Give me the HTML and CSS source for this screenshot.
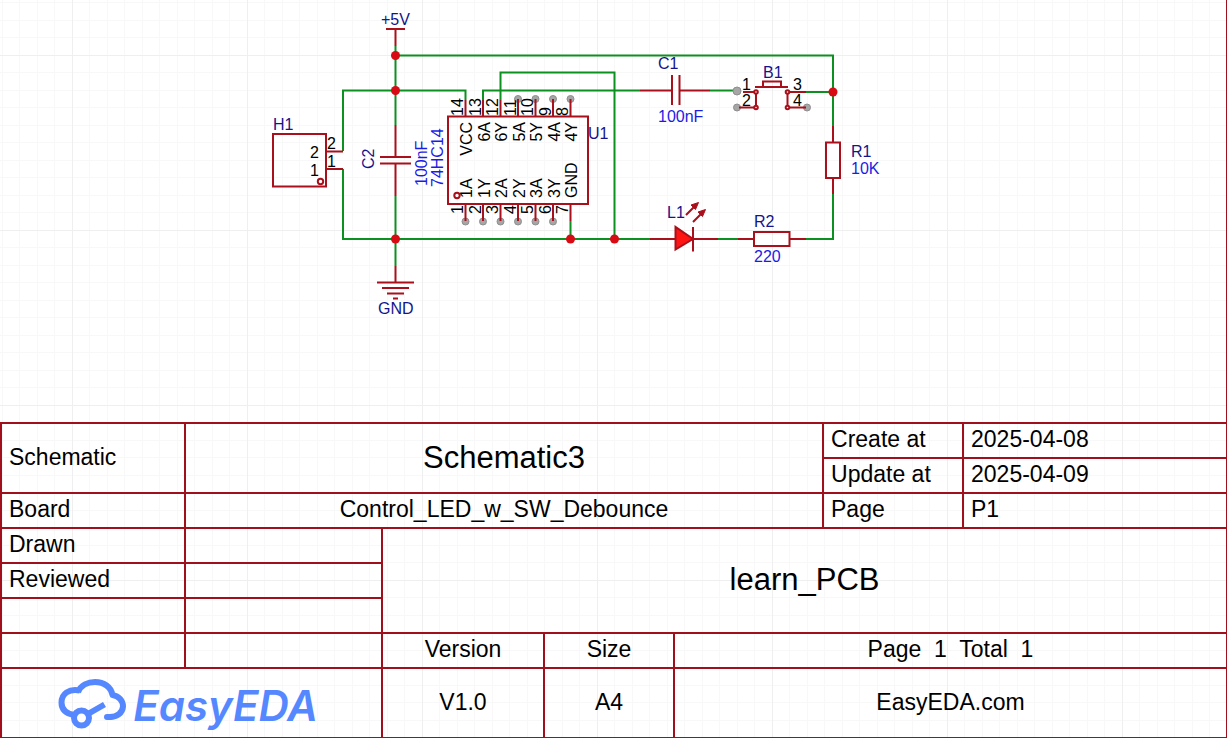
FILE: index.html
```html
<!DOCTYPE html>
<html lang="en">
<head>
<meta charset="utf-8">
<title>Schematic3 - learn_PCB</title>
<link rel="stylesheet" href="styles.css">
</head>
<body>
<main class="sheet">
  <svg class="schematic" viewBox="0 0 1226 422" role="img" aria-label="Switch debounce schematic">
    <!-- wires -->
    <g class="wire">
      <path d="M395.5 46V125M395.5 55.500H833V126M343 151V90.500H465.500V100M395.500 196V266"/>
      <path d="M343 169V239H650M483 100V90.500H640M500.500 100V72.500H614.500V239M570.500 221V239"/>
      <path d="M710 90.500H737M806 92H833M833 194V239H806M718 239H738"/>
    </g>
    <!-- unconnected pin ends -->
    <g class="open-pin">
      <circle cx="518" cy="99" r="3.500"/><circle cx="535.500" cy="99" r="3.500"/><circle cx="553" cy="99" r="3.500"/><circle cx="570.500" cy="99" r="3.500"/>
      <circle cx="465.500" cy="221.500" r="3.500"/><circle cx="483" cy="221.500" r="3.500"/><circle cx="500.500" cy="221.500" r="3.500"/><circle cx="518" cy="221.500" r="3.500"/><circle cx="535.500" cy="221.500" r="3.500"/><circle cx="553" cy="221.500" r="3.500"/>
      <circle cx="737" cy="91" r="4"/><circle cx="737" cy="107.500" r="3.500"/><circle cx="807" cy="107.500" r="3.500"/>
    </g>
    <!-- component outlines -->
    <g class="part">
      <path d="M386 29H405M395.500 29V46"/>
      <path d="M395.500 125V157M395.500 164V196M380 157H411M380 163.500H411"/>
      <path d="M395.500 266V283M377 282.500H414M382 288H409M387 293.500H404M393 298.500H398"/>
      <rect x="273" y="134" width="53" height="52.500"/>
      <path d="M326 151.500H343M326 169H343"/>
      <circle cx="320.500" cy="181.500" r="2.700"/>
      <rect x="448" y="116.500" width="140" height="87.500"/>
      <circle cx="457" cy="195.500" r="2.700"/>
      <path d="M465.500 100V116M483 100V116M500.500 100V116M518 99V116M535.500 99V116M553 99V116M570.500 99V116"/>
      <path d="M465.500 204V221M483 204V221M500.500 204V221M518 204V221M535.500 204V221M553 204V221M570.500 204V221"/>
      <path d="M640 90.500H672M680 90.500H710M672 75V105M679.500 75V105"/>
      <path d="M743 92H754M739 107.500H754M756 94V106M787.500 94V106M789.500 92H806M789.500 107.500H806M755 87H788M763 87V81.500H781V87"/>
      <circle cx="756" cy="92" r="1.800"/><circle cx="756" cy="107.500" r="1.800"/><circle cx="787.500" cy="92" r="1.800"/><circle cx="787.500" cy="107.500" r="1.800"/>
      <path d="M833 126V142M833 178V194"/>
      <rect x="826" y="142.500" width="14" height="35.500"/>
      <path d="M738 239H754M789 239H806"/>
      <rect x="754" y="232" width="35.500" height="14"/>
      <path d="M650 239H675M693 239H718M693 227V251.500M686 215L695 206M693 222L702 213"/>
      <path class="led" d="M675.500 227V249.500L693 239Z"/>
      <path class="arrow" d="M698.500 202.500L691 205L695.500 209.500ZM705.500 209.500L698 212L702.500 216.500Z"/>
    </g>
    <!-- junctions -->
    <g class="junction">
      <circle cx="395.500" cy="55.500" r="4.500"/><circle cx="395.500" cy="90.500" r="4.500"/><circle cx="395.500" cy="239" r="4.500"/>
      <circle cx="570.500" cy="239" r="4.500"/><circle cx="614.500" cy="239" r="4.500"/><circle cx="833" cy="92" r="4.500"/>
    </g>
    <!-- designators -->
    <g class="name">
      <text x="381" y="25">+5V</text>
      <text x="378" y="314">GND</text>
      <text x="273" y="130">H1</text>
      <text transform="translate(374 169) rotate(-90)">C2</text>
      <text x="588" y="139">U1</text>
      <text x="658" y="69">C1</text>
      <text x="763" y="78">B1</text>
      <text x="667" y="218">L1</text>
      <text x="754" y="227">R2</text>
      <text x="851" y="157">R1</text>
    </g>
    <!-- values -->
    <g class="value">
      <text transform="translate(427 186) rotate(-90)">100nF</text>
      <text transform="translate(443 187) rotate(-90)">74HC14</text>
      <text x="658" y="122">100nF</text>
      <text x="754" y="262">220</text>
      <text x="851" y="174">10K</text>
    </g>
    <!-- pin numbers and names -->
    <g class="pin">
      <text x="310" y="158">2</text><text x="327" y="149">2</text>
      <text x="310" y="176">1</text><text x="327" y="167">1</text>
      <text x="742" y="90">1</text><text x="742" y="106">2</text>
      <text x="793" y="90">3</text><text x="793" y="106">4</text>
      <text transform="translate(463 116) rotate(-90)">14</text>
      <text transform="translate(481 116) rotate(-90)">13</text>
      <text transform="translate(498 116) rotate(-90)">12</text>
      <text transform="translate(516 116) rotate(-90)">11</text>
      <text transform="translate(533 116) rotate(-90)">10</text>
      <text transform="translate(551 116) rotate(-90)">9</text>
      <text transform="translate(568 116) rotate(-90)">8</text>
      <text transform="translate(472 198) rotate(-90)">1A</text>
      <text transform="translate(490 198) rotate(-90)">1Y</text>
      <text transform="translate(507 198) rotate(-90)">2A</text>
      <text transform="translate(525 198) rotate(-90)">2Y</text>
      <text transform="translate(542 198) rotate(-90)">3A</text>
      <text transform="translate(560 198) rotate(-90)">3Y</text>
      <text transform="translate(577 198) rotate(-90)">GND</text>
    </g>
    <g class="pin pin-end">
      <text transform="translate(472 122) rotate(-90)">VCC</text>
      <text transform="translate(490 122) rotate(-90)">6A</text>
      <text transform="translate(507 122) rotate(-90)">6Y</text>
      <text transform="translate(525 122) rotate(-90)">5A</text>
      <text transform="translate(542 122) rotate(-90)">5Y</text>
      <text transform="translate(560 122) rotate(-90)">4A</text>
      <text transform="translate(577 122) rotate(-90)">4Y</text>
      <text transform="translate(463 205) rotate(-90)">1</text>
      <text transform="translate(481 205) rotate(-90)">2</text>
      <text transform="translate(498 205) rotate(-90)">3</text>
      <text transform="translate(516 205) rotate(-90)">4</text>
      <text transform="translate(533 205) rotate(-90)">5</text>
      <text transform="translate(551 205) rotate(-90)">6</text>
      <text transform="translate(568 205) rotate(-90)">7</text>
    </g>
  </svg>

  <table class="title-block">
    <colgroup>
      <col class="col-label"><col class="col-sign"><col class="col-version"><col class="col-size"><col class="col-space"><col class="col-key"><col>
    </colgroup>
    <tbody>
      <tr><th rowspan="2" scope="row">Schematic</th><td class="title" colspan="4" rowspan="2">Schematic3</td><th scope="row">Create at</th><td>2025-04-08</td></tr>
      <tr><th scope="row">Update at</th><td>2025-04-09</td></tr>
      <tr><th scope="row">Board</th><td class="center" colspan="4">Control_LED_w_SW_Debounce</td><th scope="row">Page</th><td>P1</td></tr>
      <tr><th scope="row">Drawn</th><td></td><td class="title" colspan="5" rowspan="3">learn_PCB</td></tr>
      <tr><th scope="row">Reviewed</th><td></td></tr>
      <tr><td></td><td></td></tr>
      <tr><td></td><td></td><th class="center" scope="col">Version</th><th class="center" scope="col">Size</th><td class="center" colspan="3">Page&nbsp; 1&nbsp; Total&nbsp; 1</td></tr>
      <tr class="foot">
        <td class="center" colspan="2">
          <div class="brand">
            <svg class="cloud" viewBox="0 0 70 52" aria-hidden="true">
              <path d="M17 38C9 36.500 4.500 32 4.500 25.500C4.500 17 12 11 23 13.500"/>
              <path d="M21 15C24 8 31 5 38 5C47 5 54 10 55.500 18C62 19 66 24 66 29.500C65.500 36 60 40 53 40"/>
              <path class="cloud-tip" d="M53 40H50"/>
              <circle cx="24.500" cy="41" r="7.500"/>
              <path d="M30 37.500L47.500 27.500"/>
            </svg>
            <span class="brand-name">EasyEDA</span>
          </div>
        </td>
        <td class="center">V1.0</td><td class="center">A4</td><td class="center" colspan="3">EasyEDA.com</td>
      </tr>
    </tbody>
  </table>
</main>
</body>
</html>
```
FILE: styles.css
```css
* {
  box-sizing: border-box;
}

body {
  margin: 0;
  background: #fff;
  color: #000;
  font-family: "Liberation Sans", Arial, sans-serif;
}

.sheet {
  border-right: 1px solid #a0101c;
  background-image:
    linear-gradient(to right, #efefef 1px, transparent 1px),
    linear-gradient(to bottom, #efefef 1px, transparent 1px),
    linear-gradient(to right, #f8f8f8 1px, transparent 1px, transparent 17px, #f8f8f8 17px, #f8f8f8 18px, transparent 18px),
    linear-gradient(to bottom, #f8f8f8 1px, transparent 1px, transparent 17px, #f8f8f8 17px, #f8f8f8 18px, transparent 18px);
  background-size: 175px 175px, 175px 175px, 35px 35px, 35px 35px;
  background-position: 72px 55px, 72px 55px, 2px 20px, 2px 20px;
}

.schematic {
  display: block;
  width: 100%;
  height: auto;
  font-size: 16px;
}

.wire {
  fill: none;
  stroke: #0c9020;
  stroke-width: 2px;
}

.part {
  fill: none;
  stroke: #a8101c;
  stroke-width: 2px;
}

.led {
  fill: #ff1414;
}

.arrow {
  fill: #a8101c;
  stroke-width: 1px;
}

.open-pin {
  fill: #a6a6a6;
  stroke: #8e8e8e;
  stroke-width: 1px;
}

.junction {
  fill: #d80a14;
}

.name {
  fill: #14148c;
}

.value {
  fill: #1c1ce6;
}

.pin {
  fill: #000;
}

.pin-end {
  text-anchor: end;
}

.title-block {
  width: 100%;
  table-layout: fixed;
  border-collapse: separate;
  border-spacing: 0;
  border-bottom: 1px solid #a0101c;
  font-size: 23px;
  line-height: 28px;
}

.col-label { width: 184px; }
.col-sign { width: 197px; }
.col-version { width: 162px; }
.col-size { width: 130px; }
.col-space { width: 149px; }
.col-key { width: 140px; }

.title-block th,
.title-block td {
  height: 35px;
  padding: 0 7px 3px;
  border-top: 2px solid #a0101c;
  border-left: 2px solid #a0101c;
  font-weight: normal;
  text-align: left;
  vertical-align: middle;
  white-space: nowrap;
}

.title-block .center,
.title-block .title {
  text-align: center;
}

.title-block .title {
  padding-bottom: 1px;
  font-size: 31px;
}

.title-block .foot td {
  height: 70px;
}

.brand {
  display: flex;
  align-items: center;
  justify-content: center;
  gap: 6px;
  padding: 2px 8px 0 0;
  color: #5588ff;
}

.cloud {
  flex: none;
  width: 70px;
  height: 52px;
  fill: none;
  stroke: currentColor;
  stroke-width: 6px;
  stroke-linejoin: round;
}

.cloud-tip {
  stroke-linecap: round;
}

.brand-name {
  padding-top: 6px;
  font-family: Inter, sans-serif;
  font-size: 42px;
  font-style: italic;
  font-weight: 600;
}
```
